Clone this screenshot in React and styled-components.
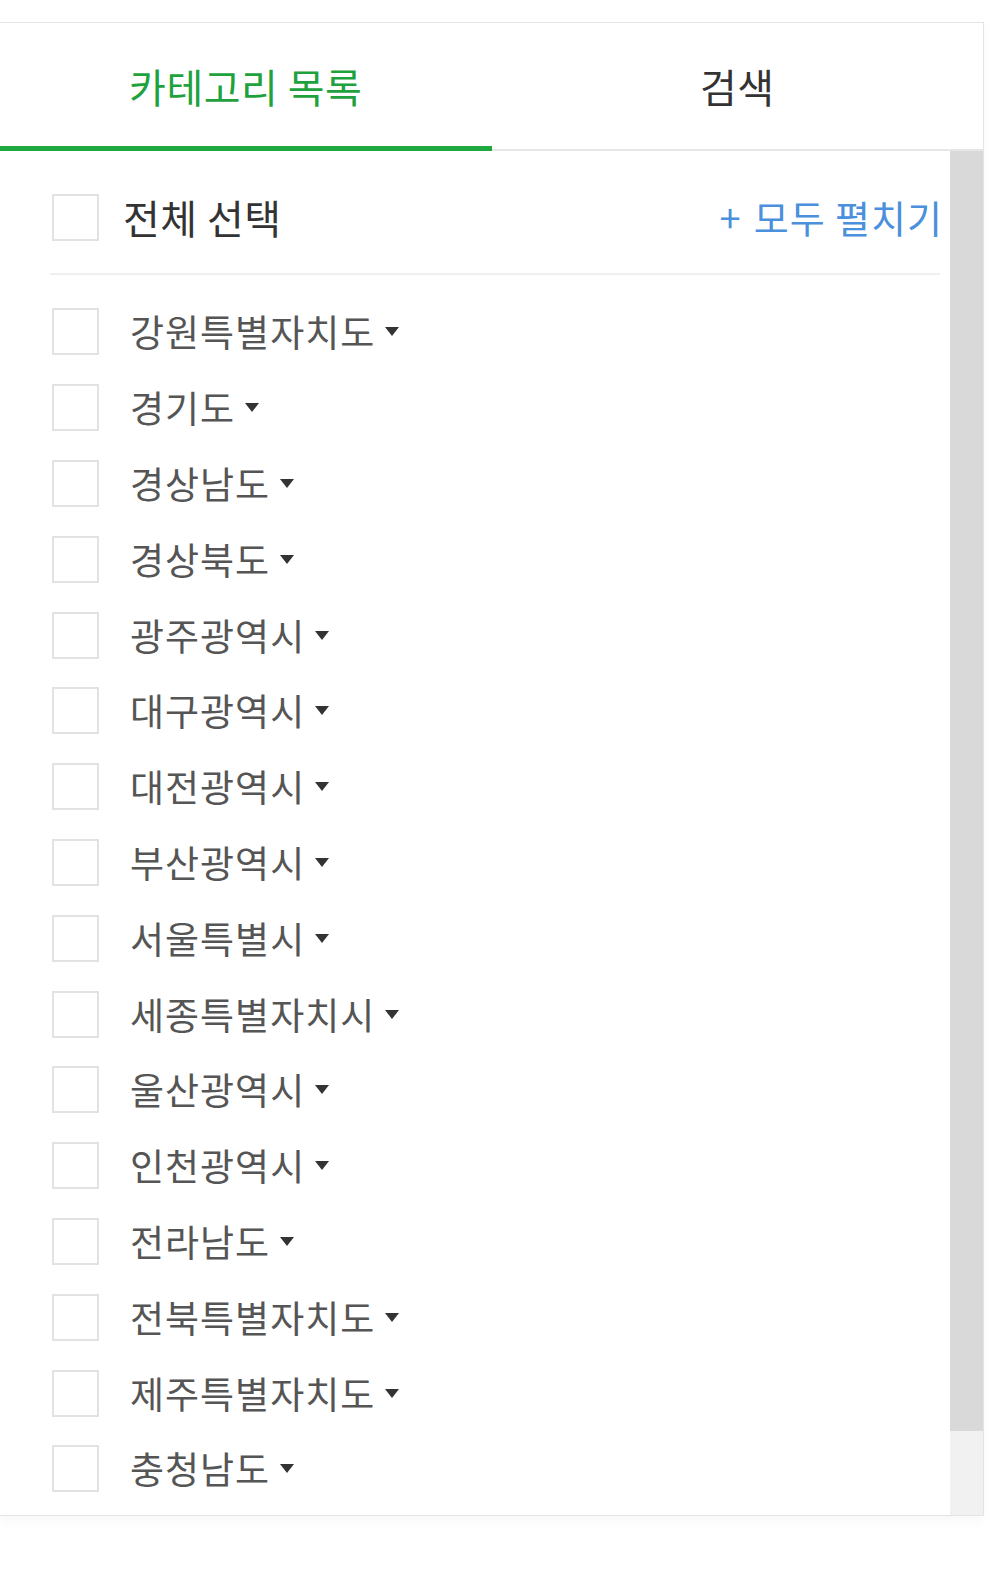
import React from "react";
import styled, { createGlobalStyle } from "styled-components";

const regions = [
  "강원특별자치도",
  "경기도",
  "경상남도",
  "경상북도",
  "광주광역시",
  "대구광역시",
  "대전광역시",
  "부산광역시",
  "서울특별시",
  "세종특별자치시",
  "울산광역시",
  "인천광역시",
  "전라남도",
  "전북특별자치도",
  "제주특별자치도",
  "충청남도",
];

function App() {
  return (
    <>
      <GlobalStyle />
      <Page>
        <Panel>
          <Tabs>
            <Tab active>카테고리 목록</Tab>
            <Tab>검색</Tab>
          </Tabs>
          <Body>
            <Content>
              <AllRow>
                <Check />
                <AllLabel>전체 선택</AllLabel>
                <Expand>
                  <Plus>+</Plus>모두 펼치기
                </Expand>
              </AllRow>
              <List>
                {regions.map((name) => (
                  <Item key={name}>
                    <Check />
                    <ItemLabel>{name}</ItemLabel>
                    <Caret />
                  </Item>
                ))}
              </List>
            </Content>
            <Scrollbar>
              <Thumb />
            </Scrollbar>
          </Body>
        </Panel>
      </Page>
    </>
  );
}

export default App;

const GlobalStyle = createGlobalStyle`
  html, body {
    margin: 0;
    padding: 0;
    background: #fff;
  }
  body {
    font-family: "Noto Sans CJK KR", "Noto Sans", sans-serif;
    overflow: hidden;
  }
`;

const Page = styled.div`
  width: 996px;
  height: 1572px;
  padding-top: 22px;
  box-sizing: border-box;
  overflow: hidden;
`;

const Panel = styled.div`
  margin-left: -1px;
  width: 985px;
  border: 1px solid #e4e4e4;
  box-sizing: border-box;
  background: #fff;
  box-shadow: 0 6px 10px rgba(0, 0, 0, 0.03);
`;

const Tabs = styled.div`
  display: flex;
  height: 128px;
`;

const Tab = styled.div`
  flex: 1;
  display: flex;
  align-items: center;
  justify-content: center;
  box-sizing: border-box;
  font-size: 40px;
  line-height: 1;
  letter-spacing: 0.5px;
  color: ${(p) => (p.active ? "#1fa23e" : "#333")};
  border-bottom: ${(p) => (p.active ? "5px solid #1fa83f" : "2px solid #e6e6e6")};
  padding-top: ${(p) => (p.active ? "3px" : "0")};
`;

const Body = styled.div`
  display: flex;
  height: 1364px;
`;

const Content = styled.div`
  flex: 1;
  padding: 0 10px 0 50px;
  box-sizing: border-box;
`;

const AllRow = styled.div`
  display: flex;
  align-items: center;
  height: 124px;
  padding: 10px 0 0 2px;
  box-sizing: border-box;
  border-bottom: 2px solid #f0f0f0;
`;

const Check = styled.span`
  display: inline-block;
  flex: none;
  width: 47px;
  height: 47px;
  box-sizing: border-box;
  border: 2px solid #e2e2e2;
  background: #fff;
`;

const AllLabel = styled.span`
  margin-left: 24px;
  font-size: 40px;
  line-height: 1;
  color: #333;
  letter-spacing: 0.5px;
`;

const Expand = styled.span`
  margin-left: auto;
  margin-right: -3px;
  font-size: 38px;
  line-height: 1;
  color: #4a90dc;
  letter-spacing: 1px;
`;

const Plus = styled.span`
  margin-right: 12px;
`;

const List = styled.div`
  padding: 19px 0 0 2px;
`;

const Item = styled.div`
  display: flex;
  align-items: center;
  height: 75.8px;
`;

const ItemLabel = styled.span`
  margin-left: 31px;
  font-size: 37px;
  line-height: 1;
  color: #555;
  letter-spacing: 1px;
`;

const Caret = styled.span`
  margin-left: 10px;
  width: 0;
  height: 0;
  border-left: 7px solid transparent;
  border-right: 7px solid transparent;
  border-top: 9px solid #333;
`;

const Scrollbar = styled.div`
  width: 33px;
  flex: none;
  background: #f1f1f1;
`;

const Thumb = styled.div`
  height: 1280px;
  background: #d9d9d9;
`;
